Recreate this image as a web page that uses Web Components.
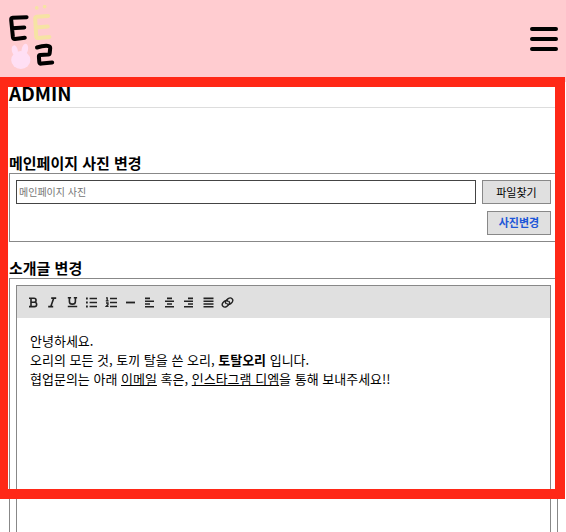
<!DOCTYPE html>
<html lang="ko">
<head>
<meta charset="utf-8">
<meta name="viewport" content="width=device-width, initial-scale=1">
<title>ADMIN</title>
<style>
body { margin: 0; background: #fff; color: #000; font-family: "Noto Sans CJK KR", "Noto Sans", sans-serif; }
</style>
</head>
<body>
<admin-page></admin-page>

<script>
function define(name, markup, setup) {
  const template = document.createElement('template');
  template.innerHTML = markup;
  customElements.define(name, class extends HTMLElement {
    constructor() {
      super();
      this.attachShadow({ mode: 'open' }).append(template.content.cloneNode(true));
    }
    connectedCallback() {
      if (setup) setup(this, this.shadowRoot);
    }
  });
}

define('brand-logo', `
<style>
:host { display: block; }
a, svg { display: block; }
svg { width: 48px; height: 64px; }
</style>
<a href="#" aria-label="EE22">
<svg viewBox="8 5 48 64" fill="none" stroke-linecap="round" stroke-linejoin="round">
  <path d="M26.6 17.2 L12.8 17.8 Q11 18 11.2 20 L12.9 37 Q13.2 39.2 15 39 L24.8 37.7 M12 28.3 L24.3 27.4" stroke="#000" stroke-width="4"/>
  <path d="M48.2 15.9 L36.8 16.7 Q35 17 35.2 19 L36.2 36 Q36.4 38.1 38 38 L49.4 37 M35.7 27.5 L47.8 26.6" stroke="#f6e3a4" stroke-width="4"/>
  <path d="M36.7 7.9h.1M44.6 6.7h.1" stroke="#f6e3a4" stroke-width="3.6"/>
  <path d="M37 47.5 Q43 45.5 48 45.9 Q50.2 46.1 50.2 48 L49.7 53 Q49.5 54.6 48 54.5 L40.3 54.9 Q38.8 55 38.9 56.5 L39.3 62 Q39.5 63.8 41.5 63.6 L52.2 62.5" stroke="#000" stroke-width="4"/>
  <g fill="#ffdff4">
    <ellipse cx="20.8" cy="60" rx="9.6" ry="9"/>
    <ellipse cx="14.8" cy="50.5" rx="3" ry="5.2" transform="rotate(-12 14.8 50.5)"/>
    <ellipse cx="24.8" cy="49.7" rx="3.2" ry="6" transform="rotate(12 24.8 49.7)"/>
    <path d="M14 53.5h12v6H14z"/>
  </g>
</svg>
</a>`);

define('site-header', `
<style>
:host { display: block; background: #ffccd0; }
header { display: flex; justify-content: space-between; align-items: center; padding: 5px 8px 8px; }
button { display: block; padding: 4px 0 0; border: 0; background: none; }
svg { display: block; width: 28px; height: 24px; }
</style>
<header>
  <slot></slot>
  <button type="button" aria-label="메뉴"><svg viewBox="0 0 28 24" stroke="#000" stroke-width="4" stroke-linecap="round"><path d="M2 2h24M2 12h24M2 22h24"/></svg></button>
</header>`);

define('admin-section', `
<style>
:host { display: flex; flex-direction: column; }
h2 { margin: 0; font-size: 15px; line-height: 20px; font-weight: 700; }
.panel { display: flex; flex-direction: column; border: 1px solid #888; padding: 6px; }
:host([grow]) { flex: 1; min-height: 0; }
:host([grow]) .panel { flex: 1; min-height: 0; border-bottom: 0; padding-bottom: 0; }
</style>
<h2></h2>
<div class="panel"><slot></slot></div>`, (el, root) => {
  root.querySelector('h2').textContent = el.getAttribute('heading');
});

define('photo-form', `
<style>
:host { display: block; }
form { display: flex; flex-direction: column; gap: 7px; margin: 0; }
.row { display: flex; gap: 6px; }
.end { justify-content: flex-end; }
input, button { box-sizing: border-box; height: 24px; margin: 0; border-radius: 0; font-family: inherit; }
input { flex: 1; min-width: 0; padding: 0 2px 2px; border: 1px solid #444; background: #fff; font-size: 10px; }
input::placeholder { color: #757575; }
button { border: 1px solid #888; background: #e0e0e0; color: #000; font-size: 11px; line-height: 20px; padding: 0; min-width: 69px; }
button.submit { min-width: 64px; color: #1d57d8; font-weight: 700; padding: 0 0 2px; }
</style>
<form>
  <div class="row">
    <input type="text" placeholder="메인페이지 사진" aria-label="메인페이지 사진">
    <button type="button">파일찾기</button>
  </div>
  <div class="row end"><button class="submit" type="button">사진변경</button></div>
</form>`);

define('tool-button', `
<style>
:host { display: block; }
button { display: block; padding: 0; border: 0; background: none; color: #222; }
svg { display: block; width: 13px; height: 13px; }
</style>
<button type="button"><svg viewBox="0 0 13 13" fill="none" stroke="currentColor" stroke-width="1.6"></svg></button>`, (el, root) => {
  const icons = {
    bold: '<path d="M2 2.2H7a2 2 0 0 1 0 4.1H4M4 2.2v8.4M2 10.6h5.5a2.1 2.1 0 0 0 0-4.3H4" stroke-width="1.6"/>',
    italic: '<path d="M5.2 2.1h5M2.2 10.6h5M7.8 2.1 4.8 10.6" stroke-width="1.6"/>',
    underline: '<path d="M1.8 1.8h3.3M7.8 1.8h3.3M3.4 1.8v3.6c0 3.6 6 3.6 6 0V1.8M1.8 10.5h9.4" stroke-width="1.6"/>',
    ul: '<path d="M1 2.5h1.8M1 6.5h1.8M1 10.5h1.8" stroke-width="1.8"/><path d="M4.6 2.5H12M4.6 6.5H12M4.6 10.5H12" stroke-width="1.4"/>',
    ol: '<path d="M1 1.8h1.2v3M.8 4.8h2.8M1 7h2v1.4l-1.8 2h2.4" stroke-width="1.3"/><path d="M5 2.5h7M5 6.5h7M5 10.5h7" stroke-width="1.4"/>',
    hr: '<path d="M2 6.5h9" stroke-width="1.8"/>',
    left: '<path d="M2 2.4h5M2 5.2h9M2 8h5M2 10.8h9"/>',
    center: '<path d="M4 2.4h5M2 5.2h9M4 8h5M2 10.8h9"/>',
    right: '<path d="M6 2.4h5M2 5.2h9M6 8h5M2 10.8h9"/>',
    justify: '<path d="M1.5 2.4h10M1.5 5.2h10M1.5 8h10M1.5 10.8h10"/>',
    link: '<path d="M5.2 7.7C3.8 6.5 4.5 5 5.5 4L7.2 2.6c3-2 5.9 1 3.9 3.6L9.7 7.7C8.4 8.7 6.7 8.7 5.6 7.4M7.8 5.3c1.4 1.2.7 2.7-.3 3.7l-1.7 1.4c-3 2-5.9-1-3.9-3.6l1.4-1.5c1.3-1 3-1 4.1.3" stroke-width="1.4"/>'
  };
  root.querySelector('svg').innerHTML = icons[el.getAttribute('icon')];
  root.querySelector('button').setAttribute('aria-label', el.getAttribute('label'));
});

define('text-editor', `
<style>
:host { display: flex; flex-direction: column; flex: 1; min-height: 0; border: 1px solid #888; border-bottom: 0; overflow: hidden; }
.bar { padding: 10px 10px 9px; background: #e0e0e0; }
.tools { display: flex; justify-content: space-between; max-width: 207px; }
.content { flex: 1; padding: 13px; font-size: 13px; line-height: 19px; }
</style>
<div class="bar"><div class="tools" role="toolbar" aria-label="서식">
  <tool-button icon="bold" label="굵게"></tool-button>
  <tool-button icon="italic" label="기울임"></tool-button>
  <tool-button icon="underline" label="밑줄"></tool-button>
  <tool-button icon="ul" label="글머리 목록"></tool-button>
  <tool-button icon="ol" label="번호 목록"></tool-button>
  <tool-button icon="hr" label="구분선"></tool-button>
  <tool-button icon="left" label="왼쪽 정렬"></tool-button>
  <tool-button icon="center" label="가운데 정렬"></tool-button>
  <tool-button icon="right" label="오른쪽 정렬"></tool-button>
  <tool-button icon="justify" label="양쪽 정렬"></tool-button>
  <tool-button icon="link" label="링크"></tool-button>
</div></div>
<div class="content"><slot></slot></div>`);

define('highlight-frame', `
<style>
:host { position: absolute; inset: 77px 1px 33px -2px; border: 10px solid #ff2817; pointer-events: none; }
</style>`);

define('admin-page', `
<style>
:host { display: flex; flex-direction: column; position: relative; height: 100vh; overflow: hidden; }
main { flex: 1; min-height: 0; display: flex; flex-direction: column; padding: 5px 8px 0 9px; background: linear-gradient(#ffccd0 5px, #fff 5px); }
h1 { margin: 0 0 45px; padding-bottom: 3px; border-bottom: 1px solid #ddd; font-size: 19px; line-height: 22px; font-weight: 700; }
site-header + main { padding-top: 5px; }
admin-section + admin-section { margin-top: 16px; }
p { margin: 0; }
a { color: inherit; text-decoration: underline; }
</style>
<site-header><brand-logo></brand-logo></site-header>
<main>
  <h1>ADMIN</h1>
  <admin-section heading="메인페이지 사진 변경"><photo-form></photo-form></admin-section>
  <admin-section heading="소개글 변경" grow>
    <text-editor>
      <p>안녕하세요.</p>
      <p>오리의 모든 것, 토끼 탈을 쓴 오리, <b>토탈오리</b> 입니다.</p>
      <p>협업문의는 아래 <a href="#">이메일</a> 혹은, <a href="#">인스타그램 디엠</a>을 통해 보내주세요!!</p>
    </text-editor>
  </admin-section>
</main>
<highlight-frame></highlight-frame>`);
</script>
</body>
</html>
